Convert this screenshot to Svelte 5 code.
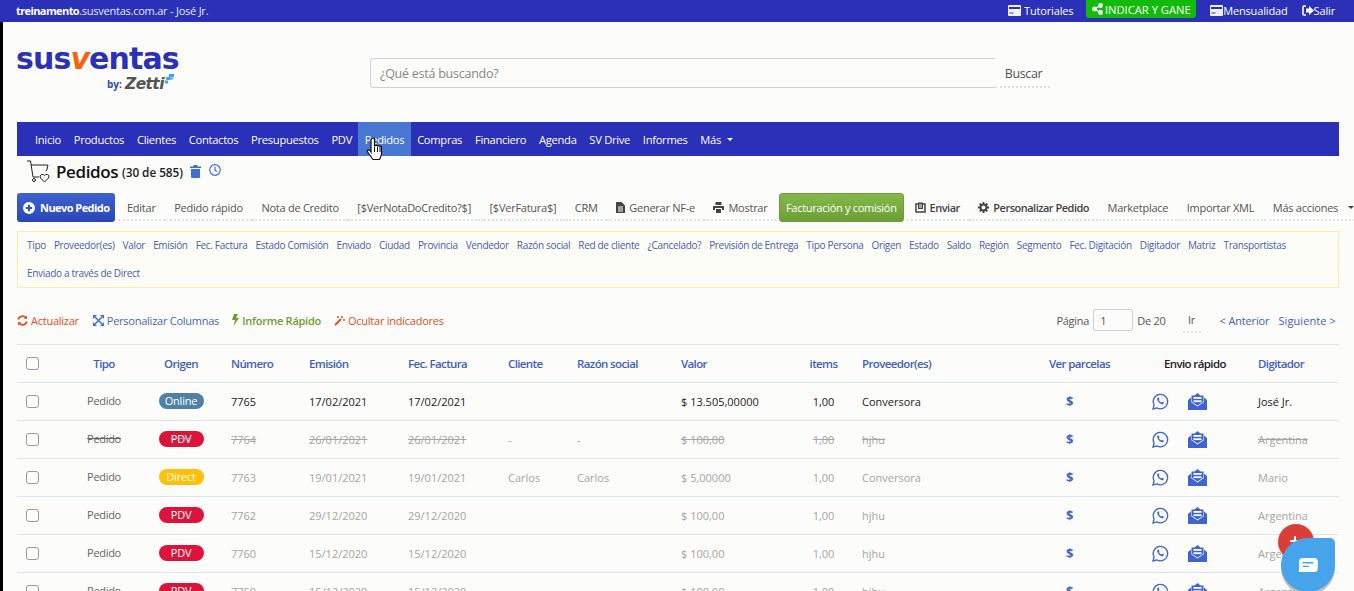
<script>
  const nav = ['Inicio','Productos','Clientes','Contactos','Presupuestos','PDV','Pedidos','Compras','Financiero','Agenda','SV Drive','Informes'];
  const filters = ['Tipo','Proveedor(es)','Valor','Emisión','Fec. Factura','Estado Comisión','Enviado','Ciudad','Provincia','Vendedor','Razón social','Red de cliente','¿Cancelado?','Previsión de Entrega','Tipo Persona','Origen','Estado','Saldo','Región','Segmento','Fec. Digitación','Digitador','Matriz','Transportistas','Enviado a través de Direct'];
  const rows = [
    {o:'Online',n:'7765',d:'17/02/2021',c:'',r:'',v:'$ 13.505,00000',p:'Conversora',g:'José Jr.',cls:'first'},
    {o:'PDV',n:'7764',d:'26/01/2021',c:'-',r:'-',v:'$ 100,00',p:'hjhu',g:'Argentina',cls:'gone'},
    {o:'Direct',n:'7763',d:'19/01/2021',c:'Carlos',r:'Carlos',v:'$ 5,00000',p:'Conversora',g:'Mario',cls:''},
    {o:'PDV',n:'7762',d:'29/12/2020',c:'',r:'',v:'$ 100,00',p:'hjhu',g:'Argentina',cls:''},
    {o:'PDV',n:'7760',d:'15/12/2020',c:'',r:'',v:'$ 100,00',p:'hjhu',g:'Argentina',cls:''},
    {o:'PDV',n:'7759',d:'15/12/2020',c:'',r:'',v:'$ 100,00',p:'hjhu',g:'Argentina',cls:''}
  ];
</script>

<div class="page">
  <header class="top">
    <div class="who"><b>treinamento</b>.susventas.com.ar - José Jr.</div>
    <div class="topright">
      <a class="tl t1"><svg width="13" height="11" viewBox="0 0 13 11"><rect x="0" y="0" width="13" height="11" rx="1" fill="#eef"/><rect x="1" y="2" width="11" height="2" fill="#2a30b8"/><rect x="1.500" y="7" width="4" height="2" fill="#8f93dc"/></svg> Tutoriales</a>
      <a class="share"><svg width="11" height="12" viewBox="0 0 11 12" fill="#fff"><circle cx="2.500" cy="6" r="2.400"/><circle cx="8.500" cy="2.500" r="2.400"/><circle cx="8.500" cy="9.500" r="2.400"/><path d="M2.500 6 8.500 2.500M2.500 6l6 3.500" stroke="#fff" stroke-width="1.400"/></svg> INDICAR Y GANE</a>
      <a class="tl t2"><svg width="13" height="11" viewBox="0 0 13 11"><rect x="0" y="0" width="13" height="11" rx="1" fill="#eef"/><rect x="1" y="2" width="11" height="2" fill="#2a30b8"/><rect x="1.500" y="7" width="4" height="2" fill="#8f93dc"/></svg>Mensualidad</a>
      <a class="tl t3"><svg width="12" height="11" viewBox="0 0 12 11" fill="none"><path d="M4 1H2Q1 1 1 2v7q0 1 1 1h2" stroke="#fff" stroke-width="1.600"/><path d="M4 3.500h3V1l5 4.500L7 10V7.500H4z" fill="#fff"/></svg>Salir</a>
    </div>
  </header>

  <div class="brand">
    <div class="logo">
      <div class="lname">sus<i>v</i>entas</div>
      <div class="lby"><span>by:</span><em>Zetti</em><svg width="11" height="10" viewBox="0 0 11 10" fill="#41a5ee"><rect x="6" y="0" width="5" height="3"/><rect x="3" y="3" width="4" height="3"/><rect x="7" y="3.500" width="3" height="2"/><rect x="2" y="6.500" width="3" height="3"/></svg></div>
    </div>
    <div class="search">
      <div class="sinput">¿Qué está buscando?</div>
      <div class="sbtn">Buscar</div>
    </div>
  </div>

  <nav class="nav">
    {#each nav as item}
      <a class:active={item === 'Pedidos'}>{item}</a>
    {/each}
    <a>Más <span class="caret"></span></a>
  </nav>

  <div class="title">
    <svg width="24" height="23" viewBox="0 0 24 23" fill="none" stroke="#222" stroke-width="1"><path d="M1 1h3.500l2.500 16h6"/><path d="M5 5h17l-1.500 6"/><circle cx="8" cy="20" r="1.500"/><path d="M18.500 22l-4-4q-1.500-2.500 1-3.500 2-.5 3 1 1-1.500 3-1 2.500 1 1 3.500z"/></svg>
    <h1>Pedidos</h1>
    <span class="cnt">(30 de 585)</span>
    <svg class="ic1" width="11" height="13" viewBox="0 0 11 13" fill="#3f6fd0"><rect x="0" y="1.500" width="11" height="1.500"/><rect x="3.500" y="0" width="4" height="2"/><path d="M1 4h9v8q0 1-1 1H2q-1 0-1-1z"/></svg>
    <svg class="ic2" width="12" height="12" viewBox="0 0 12 12" fill="none" stroke="#3f6fd0" stroke-width="1.200"><circle cx="6" cy="6" r="5.300"/><path d="M6 2.800V6.300l2.200 1.300"/></svg>
  </div>

  <div class="actions">
    <a class="btn primary"><svg width="12" height="12" viewBox="0 0 12 12"><circle cx="6" cy="6" r="6" fill="#fff"/><path d="M6 2.800v6.400M2.800 6h6.400" stroke="#2f55c4" stroke-width="2"/></svg>Nuevo Pedido</a>
    <a class="btn">Editar</a>
    <a class="btn">Pedido rápido</a>
    <a class="btn">Nota de Credito</a>
    <a class="btn">[$VerNotaDoCredito?$]</a>
    <a class="btn">[$VerFatura$]</a>
    <a class="btn">CRM</a>
    <a class="btn"><svg width="9" height="11" viewBox="0 0 9 11" fill="#444"><path d="M0 0h5.500L9 3.500V11H0z"/><path d="M2 5h5M2 7h5M2 9h5" stroke="#fff"/></svg> Generar NF-e</a>
    <a class="btn"><svg width="11" height="11" viewBox="0 0 11 11" fill="#444"><path d="M2.500 0h6v3h-6zM0 4h11v4H9V6H2v2H0zM3 7h5v4H3z"/></svg> Mostrar</a>
    <a class="btn green">Facturación y comisión</a>
    <a class="btn strong"><svg width="11" height="12" viewBox="0 0 11 12"><path d="M1 3h9v8H1z" fill="none" stroke="#444" stroke-width="1.500"/><path d="M3 1.500h5V8H3z" fill="#444"/><path d="M4 4h3M4 6h3" stroke="#fff"/></svg> Enviar</a>
    <a class="btn strong"><svg width="11" height="11" viewBox="0 0 11 11" fill="none"><circle cx="5.500" cy="5.500" r="3" stroke="#444" stroke-width="2"/><path d="M5.500 0v2M5.500 9v2M0 5.500h2M9 5.500h2M1.700 1.700l1.400 1.400M7.900 7.900l1.400 1.400M1.700 9.300l1.400-1.400M7.900 3.100l1.400-1.400" stroke="#444" stroke-width="1.800"/></svg> Personalizar Pedido</a>
    <a class="btn">Marketplace</a>
    <a class="btn">Importar XML</a>
    <a class="btn more">Más acciones <span class="caret dark"></span></a>
  </div>

  <div class="filters">
    {#each filters as f}<a>{f}</a>{/each}
  </div>

  <div class="tools">
    <div class="tleft">
      <a class="orange"><svg width="11" height="11" viewBox="0 0 11 11" fill="none" stroke="#e0511d" stroke-width="1.800"><path d="M1.200 4.500A4.400 4.400 0 0 1 9 3M9.800 6.500A4.400 4.400 0 0 1 2 8"/><path d="M10 0.500V3.800H6.700zM1 10.500V7.200h3.300z" fill="#e0511d" stroke="none"/></svg> Actualizar</a>
      <a class="blue"><svg width="11" height="11" viewBox="0 0 11 11" fill="#3f6fd0"><path d="M0 0h4L0 4zM11 0v4L7 0zM0 11V7l4 4zM11 11H7l4-4z"/><path d="M2 2l7 7M9 2l-7 7" stroke="#3f6fd0" stroke-width="1.500"/></svg> Personalizar Columnas</a>
      <a class="greent"><svg width="7" height="12" viewBox="0 0 7 12" fill="#6f9e2f"><path d="M2 0h4L4 4h3L1.500 12 3 6H0z"/></svg> Informe Rápido</a>
      <a class="red"><svg width="11" height="11" viewBox="0 0 11 11" fill="none" stroke="#e0511d"><path d="M1 10l6-6" stroke-width="2"/><path d="M8 1v2M7 2h2M10 4v2M9 5h2M4 1v2M3 2h2" stroke-width="1"/></svg> Ocultar indicadores</a>
    </div>
    <div class="pager">
      <span>Página</span><span class="pinput">1</span><span>De 20</span><span class="ir">Ir</span>
      <a class="prev">&lt; Anterior</a><a class="next">Siguiente &gt;</a>
    </div>
  </div>

  <table>
    <colgroup>
      <col style="width:51px"/><col style="width:72px"/><col style="width:82px"/><col style="width:78px"/><col style="width:99px"/><col style="width:100px"/><col style="width:69px"/><col style="width:104px"/><col style="width:128px"/><col style="width:53px"/><col style="width:187px"/><col style="width:110px"/><col style="width:99px"/><col style="width:90px"/>
    </colgroup>
    <thead>
      <tr>
        <th><span class="cb"></span></th>
        <th class="c">Tipo</th><th class="c">Origen</th><th>Número</th><th>Emisión</th><th>Fec. Factura</th><th>Cliente</th><th>Razón social</th><th>Valor</th><th class="c it">items</th><th>Proveedor(es)</th><th>Ver parcelas</th><th class="black">Envio rápido</th><th>Digitador</th>
      </tr>
    </thead>
    <tbody>
      {#each rows as r}
        <tr class={r.cls}>
          <td><span class="cb"></span></td>
          <td class="c tipo"><span>Pedido</span></td>
          <td class="c"><span class="pill {r.o}">{r.o}</span></td>
          <td>{r.n}</td><td>{r.d}</td><td>{r.d}</td><td class:dash={r.c === '-'}>{r.c}</td><td class:dash={r.r === '-'}>{r.r}</td><td>{r.v}</td>
          <td class="c it">1,00</td><td>{r.p}</td>
          <td class="dollar">$</td>
          <td class="send">
            <svg width="17" height="17" viewBox="0 0 17 17" fill="none" stroke="#3f63cf" stroke-width="1.300"><path d="M1 16l1.100-4A7.200 7.200 0 1 1 5 14.900z"/><path d="M6 4.600c-1.200.6-1 2.200 0 3.700 1.100 1.600 2.700 2.900 4.300 2.900.9 0 1.700-.7 1.600-1.500l-1.700-1-.9.800c-1-.4-2-1.300-2.500-2.500l.7-.8-.8-1.800z" fill="#3f63cf" stroke="none"/></svg>
            <svg class="mail" width="19" height="18" viewBox="0 0 19 18" fill="#3f63cf"><path d="M0 8l3-2.500V10l6.500 4.500L16 10V5.500L19 8v10H0z"/><path d="M3.500 3.500h3L9.500 1l3 2.500h3v6l-6 4-6-4z"/><rect x="5.500" y="5" width="8" height="1.800" fill="#fff"/><rect x="5.500" y="8.300" width="8" height="1.800" fill="#fff"/></svg>
          </td>
          <td>{r.g}</td>
        </tr>
      {/each}
    </tbody>
  </table>

  <div class="fab"></div>
  <div class="chat">
    <svg width="22" height="16" viewBox="0 0 24 18"><path d="M6 1h13q4 0 4 4v8q0 4-4 4H3q-2 0-1.500-2Q2 14 2 13V5q0-4 4-4z" fill="#fff"/><path d="M6 6.500h12M6 10.500h7" stroke="#45a4ea" stroke-width="1.500"/></svg>
  </div>
  <svg class="hand" width="18" height="24" viewBox="0 0 18 24"><path d="M6 1.500q1.500-1 2.500 0V9l1.500-.5q1-.3 1.500.5 1-.7 2 .2 1.300-.5 2 .8V17q-.5 3-2 5.500H7l-5-7Q.5 13.500 2 13t3 2V3q0-1 1-1.500z" fill="#fff" stroke="#111" stroke-width="1.200"/><path d="M8.500 10v5M11.500 10v5M14 10v5" stroke="#111"/></svg>
</div>

<style>
  :global(html), :global(body) { overflow: hidden; background: #fcfcfb; }
  :global(body) { margin: 0; }
  .page { position: relative; height: 591px; overflow: hidden; font-family: "Open Sans", "Noto Sans", sans-serif; font-size: 11px; color: #555; background: #fcfcfb; box-shadow: inset 3px 0 0 #000; }
  a { display: inline-flex; align-items: center; }
  svg { flex-shrink: 0; }

  .top { height: 22px; background: #2a30b8; color: #e8e8f8; display: flex; justify-content: space-between; align-items: center; }
  .who { padding-left: 16px; padding-bottom: 2px; letter-spacing: -0.23px; }
  .who b { font-weight: 700; color: #fff; letter-spacing: -0.6px; }
  .topright { display: flex; align-items: center; padding-right: 19px; color: #fff; }
  .tl { gap: 3px; padding-bottom: 2px; letter-spacing: -0.15px; }
  .t1 { margin-right: 13px; }
  .t2 { margin-left: 14px; gap: 0; }
  .t3 { margin-left: 14px; gap: 0; }
  .share { background: #12bb0b; height: 18px; padding: 0 5.500px; gap: 2px; border-radius: 0 0 3px 3px; margin-top: -4px; font-size: 11.200px; }

  .brand { height: 100px; padding-left: 16px; display: flex; }
  .logo { width: 164px; padding-top: 18px; margin-right: 190px; }
  .lname { font-family: "DejaVu Sans", sans-serif; font-weight: 700; font-size: 30px; line-height: 38px; color: #2a30b8; letter-spacing: -0.9px; white-space: nowrap; }
  .lname i { color: #f7630c; font-style: italic; }
  .lby { display: flex; align-items: center; margin-top: -2px; padding-left: 91px; height: 16px; white-space: nowrap; }
  .lby span { color: #2f4bb8; font-weight: 700; font-size: 10px; width: 18px; }
  .lby em { font-family: "DejaVu Sans", sans-serif; color: #555; font-weight: 700; font-size: 15.500px; letter-spacing: -0.6px; }
  .lby svg { margin-top: -10px; margin-left: -1px; }
  .search { display: flex; margin-top: 36px; height: 30px; }
  .sinput { height: 28px; border: 1px solid #cfd0dc; border-right: none; border-radius: 4px 0 0 4px; padding-left: 9px; font-size: 12.500px; line-height: 29px; color: #888; width: 615px; letter-spacing: -0.25px; }
  .sbtn { width: 55px; box-sizing: border-box; padding-left: 2px; text-align: center; font-size: 12.500px; line-height: 31px; height: 30px; color: #555; letter-spacing: -0.4px; border-bottom: 2px dotted #dde3e8; }

  .nav { margin-left: 17px; width: 1322px; height: 34px; background: #2a30b8; display: flex; padding-left: 11.600px; box-sizing: border-box; color: #fff; font-size: 11.200px; letter-spacing: -0.3px; }
  .nav a { padding: 0 6.400px; height: 34px; }
  .nav a.active { background: #4a77d2; }
  .caret { display: inline-block; width: 0; height: 0; border: 3.500px solid transparent; border-top-color: #fff; border-bottom: 0; margin-left: 6px; }
  .caret.dark { border-top-color: #444; }

  .title { height: 37px; padding-left: 26px; display: flex; align-items: center; color: #111; padding-bottom: 7px; box-sizing: border-box; }
  h1 { font-size: 17px; font-weight: 600; margin: 0 4px 0 6px; color: #111; letter-spacing: -0.4px; }
  .cnt { font-size: 11.800px; font-weight: 600; color: #222; margin-top: 2px; letter-spacing: -0.05px; }
  .ic1 { margin-left: 7px; }
  .ic2 { margin-left: 8px; margin-top: -2px; }

  .actions { display: flex; padding-left: 17px; height: 38px; white-space: nowrap; letter-spacing: -0.25px; }
  .btn { height: 28px; padding: 2px 9px 0; margin-right: 0.500px; gap: 4px; color: #555; border-bottom: 2px dotted #dde3e8; box-sizing: border-box; }
  .btn.primary { height: 29px; padding: 0 6px; background: linear-gradient(#3e62cf, #2a45b8); color: #fff; font-weight: 700; border: none; border-radius: 3px; gap: 5px; width: 98px; margin-right: 3px; letter-spacing: -0.55px; }
  .btn.green { height: 29px; padding: 0 6px; background: linear-gradient(#86b94a, #6c9e36); color: #fff; border: 1px solid #6c9e36; border-radius: 3px; margin: 0 2px; width: 125px; letter-spacing: -0.3px; }
  .btn.strong { font-weight: 600; color: #444; letter-spacing: -0.5px; }

  .filters { margin-left: 17px; width: 1322px; height: 57px; box-sizing: border-box; border: 1px solid #fbee9d; background: #fdfdf7; padding-left: 9px; line-height: 26px; row-gap: 2px; font-size: 10px; letter-spacing: -0.32px; color: #4a5cb6; display: flex; flex-wrap: wrap; column-gap: 8px; align-content: flex-start; }

  .tools { display: flex; justify-content: space-between; align-items: center; padding: 8px 0 0 17px; margin-right: 18px; height: 56px; box-sizing: border-box; font-size: 11px; letter-spacing: -0.25px; }
  .tleft { display: flex; gap: 13px; }
  .tleft a { gap: 3px; }
  .orange, .red { color: #e0511d; }
  .blue { color: #4a67b8; margin-left: 1px; }
  .greent { color: #6f9e2f; font-weight: 600; }
  .pager { display: flex; align-items: center; }
  .pinput { width: 40px; height: 22px; border: 1px solid #cfd0dc; border-radius: 2px; margin: 0 4px; padding-left: 6px; box-sizing: border-box; line-height: 21px; }
  .ir { width: 18px; margin-left: 17px; text-align: center; border-bottom: 2px dotted #dde3e8; line-height: 23px; }
  .prev { margin-left: 19px; color: #4a5cb6; letter-spacing: -0.15px; }
  .next { margin-left: 9px; color: #4a5cb6; letter-spacing: 0.1px; }

  table { margin-left: 17px; width: 1322px; table-layout: fixed; border-collapse: collapse; border-top: 1px solid #dbe3ec; font-size: 11px; }
  th, td { height: 38px; padding: 0 0 0 9px; box-sizing: border-box; text-align: left; border-bottom: 1px solid #dbe3ec; white-space: nowrap; color: #a5a5a5; font-weight: 400; }
  th { color: #3f5ec4; font-weight: 600; font-size: 11.500px; letter-spacing: -0.62px; }
  th.black { color: #222; padding-left: 14px; }
  th.c, td.c { text-align: center; padding-left: 0; }
  th.it, td.it { padding-right: 6px; }
  .cb { display: block; width: 13px; height: 13px; box-sizing: border-box; border: 1px solid #999; border-radius: 3px; background: #fff; }
  td.tipo { color: #666; letter-spacing: -0.3px; padding-bottom: 2px; }
  .first td { color: #222; }
  .first td.tipo { color: #666; }
  .gone td { text-decoration: line-through; }
  .gone td.dash { text-decoration: none; }
  .pill { display: block; width: 45px; height: 16px; line-height: 16px; margin: 0 auto 1px; border-radius: 8px; color: #fff; text-align: center; letter-spacing: -0.2px; }
  .Online { background: #4f81a4; }
  .PDV { background: #dc143c; }
  .Direct { background: #ffc107; }
  td.dollar { color: #3f63cf; font-weight: 700; font-size: 13px; padding-left: 26px; text-decoration: none; padding-bottom: 1px; }
  td.send { padding-left: 2px; padding-bottom: 1px; text-decoration: none; }
  .send svg { vertical-align: middle; }
  .mail { margin-left: 16px; margin-top: -1px; }

  .fab { position: absolute; left: 1278px; top: 524px; width: 36px; height: 36px; border-radius: 50%; background: #d93f35; }
  .fab::before { content: ""; position: absolute; left: 16px; top: 12px; width: 2px; height: 10px; background: #fff; }
  .fab::after { content: ""; position: absolute; left: 12px; top: 16px; width: 10px; height: 2px; background: #fff; }
  .chat { position: absolute; left: 1281px; top: 538px; width: 54px; height: 54px; background: #45a4ea; border-radius: 27px 5px 27px 27px; box-shadow: 0 3px 0 #bbb; display: flex; align-items: center; justify-content: center; }
  .hand { position: absolute; left: 366px; top: 137px; }
</style>
